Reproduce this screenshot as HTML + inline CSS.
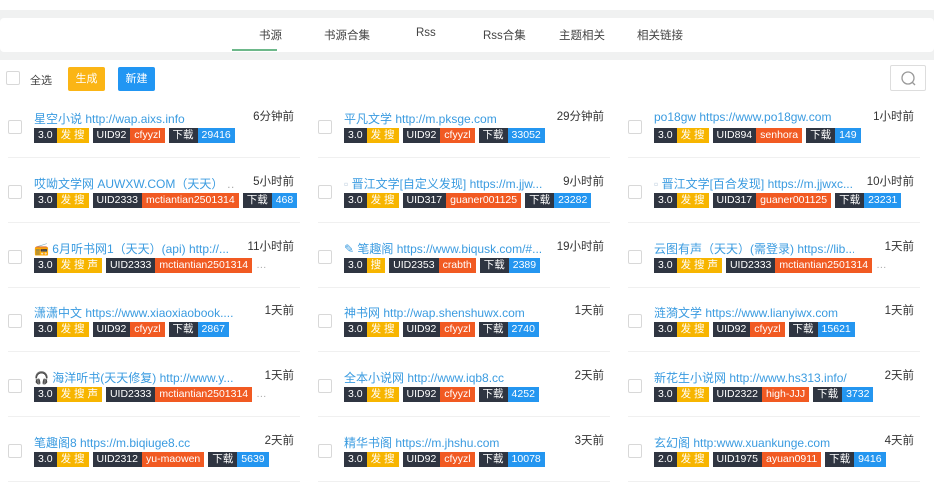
<!DOCTYPE html><html><head><meta charset="utf-8"><style>
*{margin:0;padding:0;box-sizing:border-box}
body{width:934px;height:473px;overflow:hidden;background:#fff;font-family:"Liberation Sans","Noto Sans CJK SC",sans-serif;position:relative}
.gray{position:absolute;left:0;width:934px;background:#f0f1f1}
.tabs{position:absolute;top:18px;left:0;width:934px;height:34px;background:#fff;border-radius:4px}
.tab{position:absolute;top:27px;font-size:11.5px;color:#444}
.ul{position:absolute;left:232px;top:49px;width:45px;height:2px;background:#6db88a}
.cb{position:absolute;width:14px;height:14px;border:1px solid #d8d8d8;border-radius:2px;background:#fff}
.btn{position:absolute;top:67px;height:24px;width:37px;color:#fff;font-size:11px;text-align:center;line-height:24px;border-radius:2px}
.it{position:absolute;width:292px;height:57px;border-bottom:1px solid #f0f0f0}
.it .cb{left:0;top:19px}
.tt{position:absolute;left:26px;top:9px;font-size:12px;color:#3a9be0;white-space:nowrap;overflow:hidden;width:200px}
.tm{position:absolute;right:6px;top:7px;font-size:11.5px;color:#333;font-weight:normal}
.bd{position:absolute;left:26px;top:27px;display:flex;font-size:10.5px;color:#fff;line-height:15px;white-space:nowrap}
.bd span{padding:0 4px;height:15px}
.d{background:#2f3541}.y{background:#f7b500}.o{background:#f15a22}.b{background:#2496f0}
.g{margin-left:4px}
.more{color:#aaa;padding-left:4px!important}
</style></head><body>
<div class="gray" style="top:10px;height:50px"></div>
<div class="tabs"></div>
<span class="tab" style="left:259px">书源</span>
<span class="tab" style="left:324px">书源合集</span>
<span class="tab" style="left:416px">Rss</span>
<span class="tab" style="left:483px">Rss合集</span>
<span class="tab" style="left:559px">主题相关</span>
<span class="tab" style="left:637px">相关链接</span>
<div class="ul"></div>
<div class="cb" style="left:6px;top:71px"></div>
<span style="position:absolute;left:30px;top:72px;font-size:11px;color:#444">全选</span>
<div class="btn" style="left:68px;background:#fbb515">生成</div>
<div class="btn" style="left:118px;background:#2196f3">新建</div>
<div style="position:absolute;left:890px;top:65px;width:36px;height:26px;border:1px solid #ddd;border-radius:2px"><svg width="36" height="26"><circle cx="17" cy="12" r="6" fill="none" stroke="#999" stroke-width="1.3"/><path d="M21 16l3 3" stroke="#999" stroke-width="1.3"/></svg></div>

<div class="it" style="left:8px;top:101px"><div class="cb"></div><div class="tt">星空小说 http://wap.aixs.info</div><div class="tm">6分钟前</div><div class="bd"><span class="d">3.0</span><span class="y">发 搜</span><span class="d g">UID92</span><span class="o">cfyyzl</span><span class="d g">下载</span><span class="b">29416</span></div></div>
<div class="it" style="left:318px;top:101px"><div class="cb"></div><div class="tt">平凡文学 http://m.pksge.com</div><div class="tm">29分钟前</div><div class="bd"><span class="d">3.0</span><span class="y">发 搜</span><span class="d g">UID92</span><span class="o">cfyyzl</span><span class="d g">下载</span><span class="b">33052</span></div></div>
<div class="it" style="left:628px;top:101px"><div class="cb"></div><div class="tt">po18gw https://www.po18gw.com</div><div class="tm">1小时前</div><div class="bd"><span class="d">3.0</span><span class="y">发 搜</span><span class="d g">UID894</span><span class="o">senhora</span><span class="d g">下载</span><span class="b">149</span></div></div>

<div class="it" style="left:8px;top:166px"><div class="cb"></div><div class="tt">哎呦文学网 AUWXW.COM（天天） <span style="color:#aaa">…</span></div><div class="tm">5小时前</div><div class="bd"><span class="d">3.0</span><span class="y">发 搜</span><span class="d g">UID2333</span><span class="o">mctiantian2501314</span><span class="d g">下载</span><span class="b">468</span></div></div>
<div class="it" style="left:318px;top:166px"><div class="cb"></div><div class="tt"><span style="color:#bcd">▫</span> 晋江文学[自定义发现] https://m.jjw...</div><div class="tm">9小时前</div><div class="bd"><span class="d">3.0</span><span class="y">发 搜</span><span class="d g">UID317</span><span class="o">guaner001125</span><span class="d g">下载</span><span class="b">23282</span></div></div>
<div class="it" style="left:628px;top:166px"><div class="cb"></div><div class="tt"><span style="color:#bcd">▫</span> 晋江文学[百合发现] https://m.jjwxc...</div><div class="tm">10小时前</div><div class="bd"><span class="d">3.0</span><span class="y">发 搜</span><span class="d g">UID317</span><span class="o">guaner001125</span><span class="d g">下载</span><span class="b">23231</span></div></div>

<div class="it" style="left:8px;top:231px"><div class="cb"></div><div class="tt"><span style="color:#333">📻</span> 6月听书网1（天天）(api) http://...</div><div class="tm">11小时前</div><div class="bd"><span class="d">3.0</span><span class="y">发 搜 声</span><span class="d g">UID2333</span><span class="o">mctiantian2501314</span><span class="more">…</span></div></div>
<div class="it" style="left:318px;top:231px"><div class="cb"></div><div class="tt">✎ 笔趣阁 https://www.biqusk.com/#...</div><div class="tm">19小时前</div><div class="bd"><span class="d">3.0</span><span class="y">搜</span><span class="d g">UID2353</span><span class="o">crabth</span><span class="d g">下载</span><span class="b">2389</span></div></div>
<div class="it" style="left:628px;top:231px"><div class="cb"></div><div class="tt">云图有声（天天）(需登录) https://lib...</div><div class="tm">1天前</div><div class="bd"><span class="d">3.0</span><span class="y">发 搜 声</span><span class="d g">UID2333</span><span class="o">mctiantian2501314</span><span class="more">…</span></div></div>

<div class="it" style="left:8px;top:295px"><div class="cb"></div><div class="tt">潇潇中文 https://www.xiaoxiaobook....</div><div class="tm">1天前</div><div class="bd"><span class="d">3.0</span><span class="y">发 搜</span><span class="d g">UID92</span><span class="o">cfyyzl</span><span class="d g">下载</span><span class="b">2867</span></div></div>
<div class="it" style="left:318px;top:295px"><div class="cb"></div><div class="tt">神书网 http://wap.shenshuwx.com</div><div class="tm">1天前</div><div class="bd"><span class="d">3.0</span><span class="y">发 搜</span><span class="d g">UID92</span><span class="o">cfyyzl</span><span class="d g">下载</span><span class="b">2740</span></div></div>
<div class="it" style="left:628px;top:295px"><div class="cb"></div><div class="tt">涟漪文学 https://www.lianyiwx.com</div><div class="tm">1天前</div><div class="bd"><span class="d">3.0</span><span class="y">发 搜</span><span class="d g">UID92</span><span class="o">cfyyzl</span><span class="d g">下载</span><span class="b">15621</span></div></div>

<div class="it" style="left:8px;top:360px"><div class="cb"></div><div class="tt"><span style="color:#333">🎧</span> 海洋听书(天天修复) http://www.y...</div><div class="tm">1天前</div><div class="bd"><span class="d">3.0</span><span class="y">发 搜 声</span><span class="d g">UID2333</span><span class="o">mctiantian2501314</span><span class="more">…</span></div></div>
<div class="it" style="left:318px;top:360px"><div class="cb"></div><div class="tt">全本小说网 http://www.iqb8.cc</div><div class="tm">2天前</div><div class="bd"><span class="d">3.0</span><span class="y">发 搜</span><span class="d g">UID92</span><span class="o">cfyyzl</span><span class="d g">下载</span><span class="b">4252</span></div></div>
<div class="it" style="left:628px;top:360px"><div class="cb"></div><div class="tt">新花生小说网 http://www.hs313.info/</div><div class="tm">2天前</div><div class="bd"><span class="d">3.0</span><span class="y">发 搜</span><span class="d g">UID2322</span><span class="o">high-JJJ</span><span class="d g">下载</span><span class="b">3732</span></div></div>

<div class="it" style="left:8px;top:425px"><div class="cb"></div><div class="tt">笔趣阁8 https://m.biqiuge8.cc</div><div class="tm">2天前</div><div class="bd"><span class="d">3.0</span><span class="y">发 搜</span><span class="d g">UID2312</span><span class="o">yu-maowen</span><span class="d g">下载</span><span class="b">5639</span></div></div>
<div class="it" style="left:318px;top:425px"><div class="cb"></div><div class="tt">精华书阁 https://m.jhshu.com</div><div class="tm">3天前</div><div class="bd"><span class="d">3.0</span><span class="y">发 搜</span><span class="d g">UID92</span><span class="o">cfyyzl</span><span class="d g">下载</span><span class="b">10078</span></div></div>
<div class="it" style="left:628px;top:425px"><div class="cb"></div><div class="tt">玄幻阁 http:www.xuankunge.com</div><div class="tm">4天前</div><div class="bd"><span class="d">2.0</span><span class="y">发 搜</span><span class="d g">UID1975</span><span class="o">ayuan0911</span><span class="d g">下载</span><span class="b">9416</span></div></div>
</body></html>
